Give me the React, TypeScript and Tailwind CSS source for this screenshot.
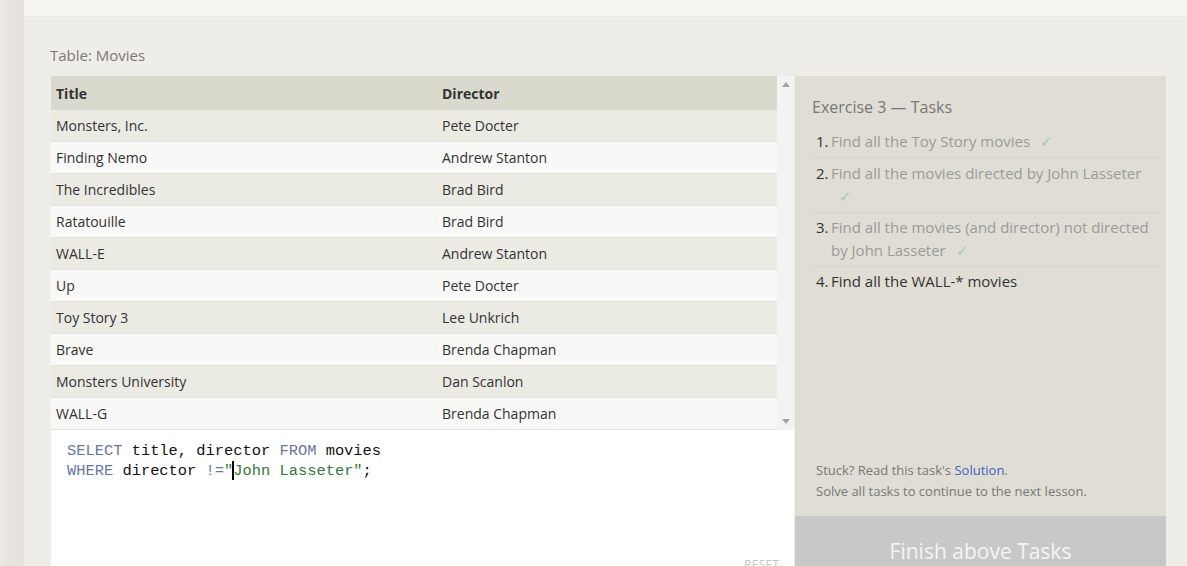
import React from "react";

const rows: [string, string][] = [
  ["Monsters, Inc.", "Pete Docter"],
  ["Finding Nemo", "Andrew Stanton"],
  ["The Incredibles", "Brad Bird"],
  ["Ratatouille", "Brad Bird"],
  ["WALL-E", "Andrew Stanton"],
  ["Up", "Pete Docter"],
  ["Toy Story 3", "Lee Unkrich"],
  ["Brave", "Brenda Chapman"],
  ["Monsters University", "Dan Scanlon"],
  ["WALL-G", "Brenda Chapman"],
];

const Check = () => <span className="ml-[10px] text-[#a9cba6]">✓</span>;

export default function App() {
  return (
    <div
      className="flex w-[1187px] h-[566px] overflow-hidden bg-[#efede7]"
      style={{ fontFamily: '"Open Sans", "Noto Sans", sans-serif' }}
    >
      <div className="w-[24px] shrink-0 bg-gradient-to-r from-[#ebe8e5] to-[#e4e0db]" />
      <div className="flex-1 flex flex-col">
        <div className="h-[17px] shrink-0 bg-[#f6f5f1] border-b border-[#ebe9e3]" />
        <div className="flex-1 pl-[27px] pt-[28px]">
          <div className="text-[15px] leading-[20px] text-[#7a7a7a] h-[20px] -ml-[1px]">Table: Movies</div>
          <div className="flex mt-[11px]">
            <div className="w-[743px] flex flex-col">
              <div className="flex h-[354px]">
                <div className="w-[726px] text-[14px] text-[#333]">
                  <div className="flex h-[34px] items-center bg-[#dad9ce] font-bold pt-[1px]">
                    <div className="w-[391px] pl-[5px]">Title</div>
                    <div>Director</div>
                  </div>
                  {rows.map(([t, d], i) => (
                    <div
                      key={i}
                      className={`flex h-[32px] items-center border-b border-[#e3e2dc] ${
                        i % 2 === 0 ? "bg-[#ebeae3]" : "bg-[#f8f8f6]"
                      }`}
                    >
                      <div className="w-[391px] pl-[5px]">{t}</div>
                      <div>{d}</div>
                    </div>
                  ))}
                </div>
                <div className="w-[17px] bg-[#f3f3f3] flex flex-col justify-between items-center py-[6px]">
                  <svg width="8" height="5" viewBox="0 0 8 5">
                    <path d="M0 5 L4 0 L8 5 Z" fill="#a3a3a3" />
                  </svg>
                  <svg width="8" height="5" viewBox="0 0 8 5">
                    <path d="M0 0 L4 5 L8 0 Z" fill="#a3a3a3" />
                  </svg>
                </div>
              </div>
              <div className="relative flex-1 bg-white h-[140px]">
                <div
                  className="pl-[16px] pt-[11px] text-[15.4px] leading-[20px] text-[#111] whitespace-pre"
                  style={{ fontFamily: '"Liberation Mono", "DejaVu Sans Mono", monospace' }}
                >
                  <div>
                    <span className="text-[#6676a6]">SELECT</span> title, director{" "}
                    <span className="text-[#6676a6]">FROM</span> movies
                  </div>
                  <div>
                    <span className="text-[#6676a6]">WHERE</span> director{" "}
                    <span className="text-[#6676a6]">!=</span>
                    <span className="text-[#2f7a3a]">"</span>
                    <span className="inline-block w-[2px] h-[19px] bg-black align-middle -mx-[1px]" />
                    <span className="text-[#2f7a3a]">John Lasseter"</span>;
                  </div>
                </div>
                <div className="absolute left-[693px] top-[126px] text-[12px] text-[#c4c4c4] tracking-wide">
                  RESET
                </div>
              </div>
            </div>
            <div className="w-[371px] ml-[1px] flex flex-col">
              <div className="h-[440px] bg-[#e0ded4] pl-[17px] pr-[6px] pt-[20px] flex flex-col">
                <div className="text-[16px] leading-[22px] text-[#777]">Exercise 3 — Tasks</div>
                <ol className="mt-[12px] text-[15px] leading-[23px] text-[#9a9a9a]">
                  <li className="flex pb-[4px] border-b border-[#d6d4ca]">
                    <span className="w-[19px] pl-[4px] text-[#333]">1.</span>
                    <span>
                      Find all the Toy Story movies
                      <Check />
                    </span>
                  </li>
                  <li className="flex pt-[4px] pb-[4px] border-b border-[#d6d4ca] ml-0">
                    <span className="w-[19px] pl-[4px] text-[#333] shrink-0">2.</span>
                    <span className="flex-1">
                      Find all the movies directed by John Lasseter
                      <br />
                      <span className="ml-[-2px]"><Check /></span>
                    </span>
                  </li>
                  <li className="flex pt-[3px] pb-[4px] border-b border-[#d6d4ca]">
                    <span className="w-[19px] pl-[4px] text-[#333] shrink-0">3.</span>
                    <span className="flex-1">
                      Find all the movies (and director) not directed by John Lasseter
                      <Check />
                    </span>
                  </li>
                  <li className="flex pt-[3px] text-[#333]">
                    <span className="w-[19px] pl-[4px] shrink-0">4.</span>
                    <span>Find all the WALL-* movies</span>
                  </li>
                </ol>
                <div className="mt-auto mb-[14px] pl-[4px] text-[13px] leading-[21px] text-[#777]">
                  <div>
                    Stuck? Read this task's <span className="text-[#3b5fc4]">Solution</span>.
                  </div>
                  <div>Solve all tasks to continue to the next lesson.</div>
                </div>
              </div>
              <div className="h-[60px] bg-[#c8c8c8] flex justify-center pt-[20px] text-[21px] text-[#f4f4f4]">
                Finish above Tasks
              </div>
            </div>
          </div>
        </div>
      </div>
    </div>
  );
}
